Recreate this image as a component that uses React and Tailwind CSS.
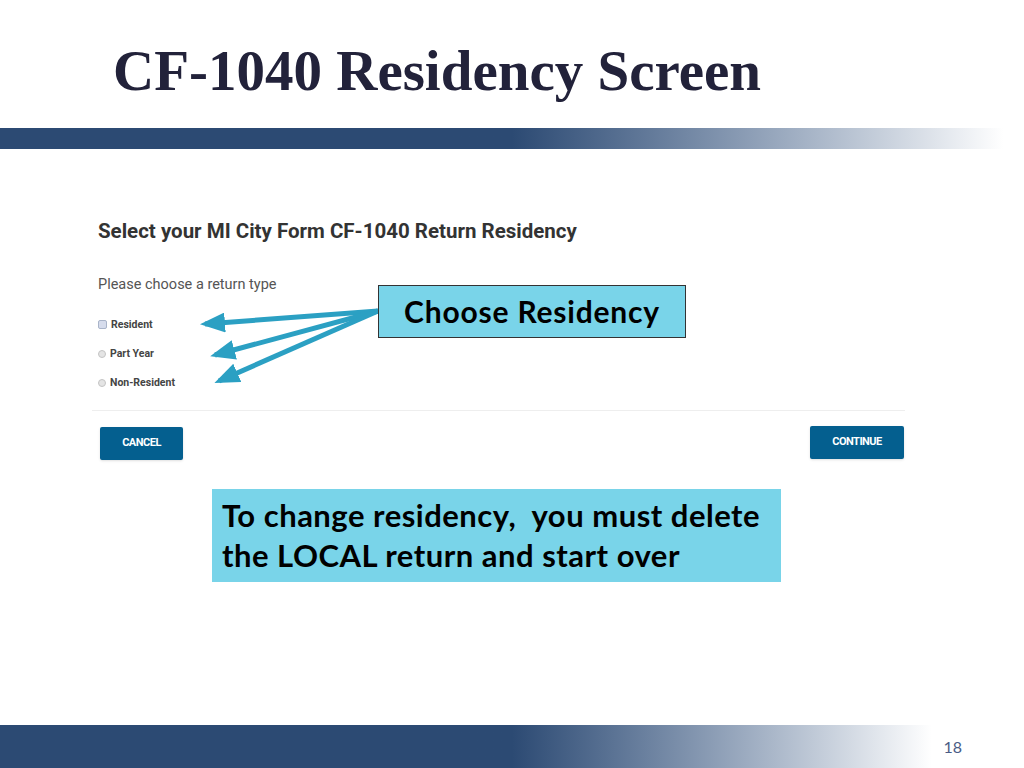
const serif = { fontFamily: '"Liberation Serif", "DejaVu Serif", serif' }
const callout = { fontFamily: 'Lato, "Open Sans", sans-serif' }

function Arrows() {
  return (
    <svg className="absolute left-0 top-0 pointer-events-none" width="1024" height="768">
      <defs>
        <marker id="head" markerWidth="5" markerHeight="4" refX="4" refY="2" orient="auto" markerUnits="strokeWidth">
          <path d="M0,0 L5,2 L0,4 Z" fill="#2ba0c3" />
        </marker>
      </defs>
      <g stroke="#2ba0c3" strokeWidth="5" fill="none" markerEnd="url(#head)">
        <line x1="378" y1="311" x2="205" y2="324" />
        <line x1="378" y1="311" x2="215" y2="355" />
        <line x1="378" y1="311" x2="219" y2="381" />
      </g>
    </svg>
  )
}

function Radio({ label, checked }) {
  return (
    <div className="flex items-center gap-[4px] h-[29px]">
      {checked ? (
        <span className="w-[9px] h-[9px] rounded-[2px] border border-[#a9b4c9] bg-[#d6dcec]" />
      ) : (
        <span className="w-[8px] h-[8px] rounded-full border border-[#c4c4c4] bg-[#e4e4e4]" />
      )}
      <span className="text-[10.5px] font-bold text-[#444]">{label}</span>
    </div>
  )
}

export default function App() {
  return (
    <div className="relative w-[1024px] h-[768px] bg-white overflow-hidden" style={{ fontFamily: 'Roboto, "Liberation Sans", sans-serif' }}>
      <div className="h-[128px] pl-[113px] pt-[35px]">
        <h1 className="text-[57px] leading-[72px] font-bold text-[#22223a]" style={serif}>
          CF-1040 Residency Screen
        </h1>
      </div>
      <div className="h-[21px] bg-gradient-to-r from-[#2c4a73] from-50% to-white to-[98%]" />

      <div className="pl-[98px] pr-[120px] pt-[70px]">
        <h2 className="text-[20.5px] font-bold text-[#333] leading-[24px]">
          Select your MI City Form CF-1040 Return Residency
        </h2>
        <p className="mt-[34px] text-[14.5px] text-[#555] leading-[16px]">Please choose a return type</p>
        <div className="mt-[17px] flex flex-col">
          <Radio label="Resident" checked />
          <Radio label="Part Year" />
          <Radio label="Non-Resident" />
        </div>
        <div className="mt-[13px] -ml-[6px] w-[813px] border-t border-[#eeeeee]" />
        <div className="mt-[15px] ml-[2px] flex justify-between w-[804px] items-start">
          <button className="w-[83px] h-[33px] mt-[1px] rounded-[2px] bg-[#045f8f] text-white text-[11px] font-bold tracking-[-0.5px] shadow-sm">
            CANCEL
          </button>
          <button className="w-[94px] h-[33px] rounded-[2px] bg-[#045f8f] text-white text-[11px] font-bold tracking-[-0.5px] shadow-sm">
            CONTINUE
          </button>
        </div>
      </div>

      <div className="ml-[212px] mt-[29px] w-[569px] h-[93px] bg-[#79d4e9] px-[10px] pt-[6px]">
        <p className="text-[31px] leading-[40px] font-bold text-black tracking-[0.5px]" style={callout}>
          To change residency,&nbsp; you must delete
          <br />
          the LOCAL return and start over
        </p>
      </div>

      <div className="absolute left-0 bottom-0 w-full h-[43px] bg-gradient-to-r from-[#2c4a73] from-50% to-white to-[91%] flex items-center justify-end pr-[62px]">
        <span className="text-[16px] text-[#4a5c85]" style={{ fontFamily: 'Lato, sans-serif' }}>18</span>
      </div>

      <Arrows />

      <div className="absolute left-[378px] top-[285px] w-[308px] h-[53px] bg-[#79d4e9] border border-[#333] flex items-center justify-center">
        <span className="text-[30px] font-bold text-black tracking-[0.8px]" style={callout}>
          Choose Residency
        </span>
      </div>
    </div>
  )
}
